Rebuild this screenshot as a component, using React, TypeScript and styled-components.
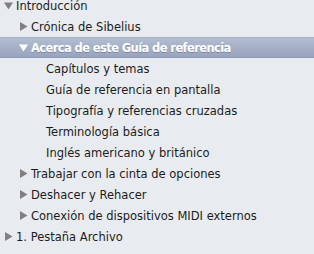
import React from "react";
import styled, { createGlobalStyle } from "styled-components";

type Item = { label: string; level: number; arrow?: "open" | "closed"; selected?: boolean };

const items: Item[] = [
  { label: "Introducción", level: 0, arrow: "open" },
  { label: "Crónica de Sibelius", level: 1, arrow: "closed" },
  { label: "Acerca de este Guía de referencia", level: 1, arrow: "open", selected: true },
  { label: "Capítulos y temas", level: 2 },
  { label: "Guía de referencia en pantalla", level: 2 },
  { label: "Tipografía y referencias cruzadas", level: 2 },
  { label: "Terminología básica", level: 2 },
  { label: "Inglés americano y británico", level: 2 },
  { label: "Trabajar con la cinta de opciones", level: 1, arrow: "closed" },
  { label: "Deshacer y Rehacer", level: 1, arrow: "closed" },
  { label: "Conexión de dispositivos MIDI externos", level: 1, arrow: "closed" },
  { label: "1. Pestaña Archivo", level: 0, arrow: "closed" },
];

const Global = createGlobalStyle`
  html, body {
    margin: 0;
    padding: 0;
    background: #e8ebf0;
    overflow: hidden;
  }
`;

const Sidebar = styled.div`
  width: 314px;
  height: 254px;
  overflow: hidden;
  background: #e8ebf0;
  font-family: "DejaVu Sans", "Liberation Sans", sans-serif;
  font-size: 11.5px;
`;

const List = styled.ul`
  list-style: none;
  margin: -5px 0 0 0;
  padding: 0;
`;

const Row = styled.li<{ $level: number; $selected?: boolean }>`
  height: 21px;
  display: flex;
  align-items: center;
  box-sizing: border-box;
  padding-left: ${(p) => 4 + p.$level * 15}px;
  color: ${(p) => (p.$selected ? "#fff" : "#1c1c1c")};
  font-weight: ${(p) => (p.$selected ? "bold" : "normal")};
  letter-spacing: ${(p) => (p.$selected ? "-0.6px" : "normal")};
  white-space: nowrap;
  background: ${(p) =>
    p.$selected ? "linear-gradient(#b3bdd1, #98a4bd)" : "transparent"};
  border-top: 1px solid ${(p) => (p.$selected ? "#a6b1c6" : "transparent")};
  border-bottom: 1px solid ${(p) => (p.$selected ? "#8e9ab4" : "transparent")};
  text-shadow: ${(p) => (p.$selected ? "0 1px 0 rgba(60,70,100,0.35)" : "none")};
`;

const Arrow = styled.span<{ $selected?: boolean }>`
  width: 12px;
  display: inline-flex;
  justify-content: flex-start;
  color: ${(p) => (p.$selected ? "#fff" : "#808080")};
  svg {
    display: block;
  }
`;

const Label = styled.span``;

function Triangle({ open }: { open: boolean }) {
  return (
    <svg width="9" height="9" viewBox="0 0 9 9">
      {open ? (
        <polygon points="0,1.5 9,1.5 4.5,8.5" fill="currentColor" />
      ) : (
        <polygon points="1,0 8.5,4.5 1,9" fill="currentColor" />
      )}
    </svg>
  );
}

export default function App() {
  return (
    <>
      <Global />
      <Sidebar>
        <List>
          {items.map((it) => (
            <Row key={it.label} $level={it.level} $selected={it.selected}>
              <Arrow $selected={it.selected}>
                {it.arrow ? <Triangle open={it.arrow === "open"} /> : null}
              </Arrow>
              <Label>{it.label}</Label>
            </Row>
          ))}
        </List>
      </Sidebar>
    </>
  );
}
